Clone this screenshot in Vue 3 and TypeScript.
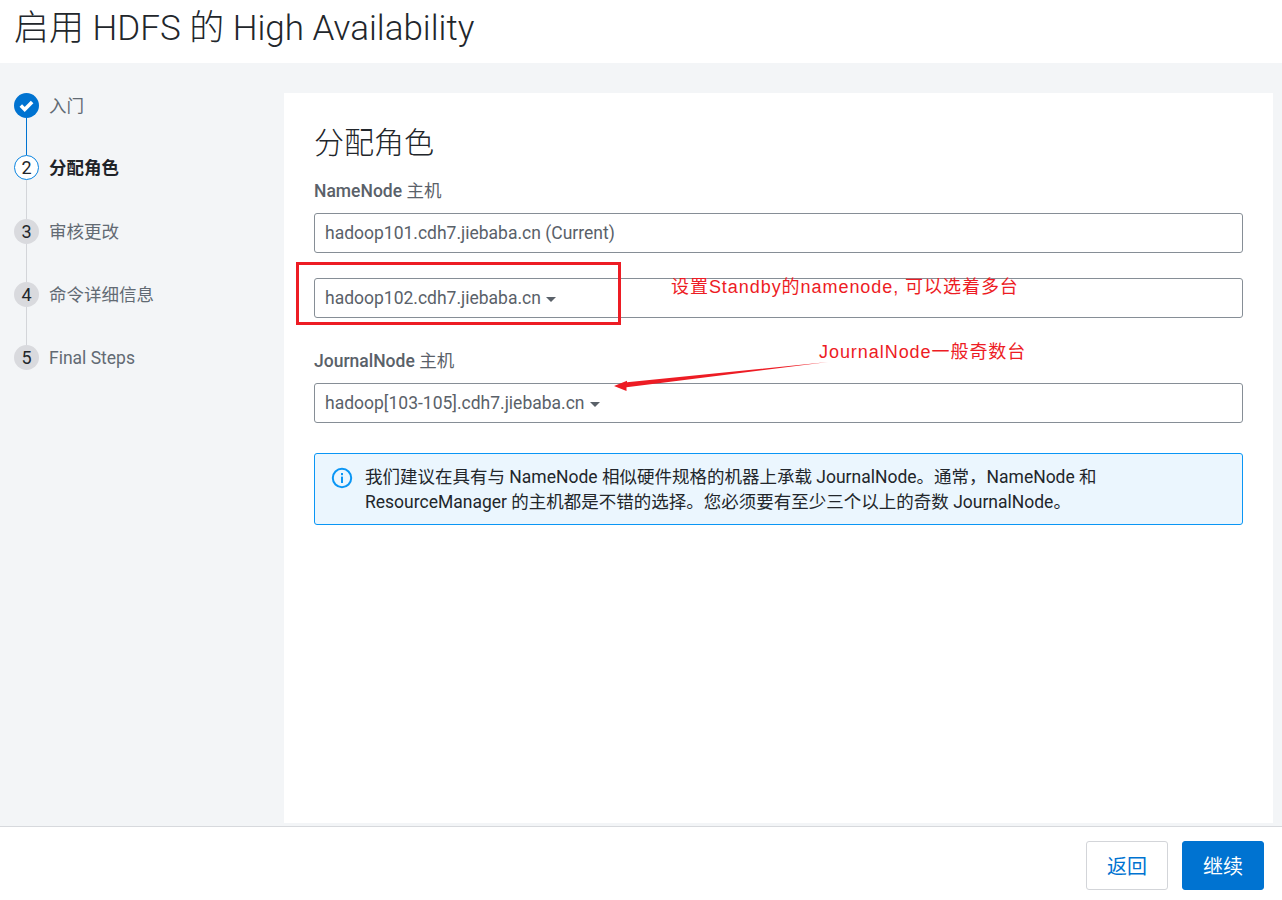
<script setup lang="ts">
const steps = [
  { n: '', label: '入门', state: 'done' },
  { n: '2', label: '分配角色', state: 'active' },
  { n: '3', label: '审核更改', state: 'todo' },
  { n: '4', label: '命令详细信息', state: 'todo' },
  { n: '5', label: 'Final Steps', state: 'todo' },
]
</script>

<template>
  <div class="page">
    <header class="head"><h1>启用 HDFS 的 High Availability</h1></header>
    <div class="middle">
      <nav class="side">
        <div v-for="(s, i) in steps" :key="i" class="step" :class="s.state">
          <span class="dot">
            <svg v-if="s.state === 'done'" width="25" height="25" viewBox="0 0 25 25">
              <circle cx="12.5" cy="12.5" r="12.5" fill="#0073d1" />
              <path d="M6.8 12.6l3.9 3.9 7.4-7.5" fill="none" stroke="#fff" stroke-width="3.6" />
            </svg>
            <template v-else>{{ s.n }}</template>
          </span>
          <span class="label">{{ s.label }}</span>
        </div>
      </nav>
      <main class="panel">
        <h2>分配角色</h2>
        <label class="lbl">NameNode <span>主机</span></label>
        <div class="field">hadoop101.cdh7.jiebaba.cn (Current)</div>
        <div class="field second">hadoop102.cdh7.jiebaba.cn<i class="caret"></i></div>
        <label class="lbl two">JournalNode <span>主机</span></label>
        <div class="field">hadoop[103-105].cdh7.jiebaba.cn<i class="caret"></i></div>
        <div class="alert">
          <svg class="info" width="22" height="22" viewBox="0 0 22 22">
            <circle cx="11" cy="11" r="9.2" fill="none" stroke="#0a96f5" stroke-width="2" />
            <rect x="10" y="9.6" width="2" height="6.4" fill="#0a96f5" />
            <rect x="10" y="6" width="2" height="2.2" fill="#0a96f5" />
          </svg>
          <p>我们建议在具有与 NameNode 相似硬件规格的机器上承载 JournalNode。通常，NameNode 和 ResourceManager 的主机都是不错的选择。您必须要有至少三个以上的奇数 JournalNode。</p>
        </div>
      </main>
    </div>
    <footer class="foot">
      <button class="btn ghost">返回</button>
      <button class="btn primary">继续</button>
    </footer>

    <div class="redbox"></div>
    <div class="note n1">设置Standby的namenode, 可以选着多台</div>
    <div class="note n2">JournalNode一般奇数台</div>
    <svg class="arrow" width="240" height="40" viewBox="0 0 240 40">
      <polygon points="217,4 16,24.2 16,22.8 3,28 15.5,33 15.5,29.2" fill="#ed1c24" />
    </svg>
  </div>
</template>

<style>
html, body { margin: 0; background: #fff; }
</style>

<style scoped>
.page {
  position: relative;
  width: 1282px;
  height: 900px;
  display: flex;
  flex-direction: column;
  overflow: hidden;
  font-family: Roboto, "Noto Sans CJK SC", sans-serif;
  color: #1f2328;
}
.head { height: 63px; flex: none; background: #fff; display: flex; align-items: center; padding-left: 14px; }
h1 { margin: 0; font-size: 35px; font-weight: 300; color: #22262b; line-height: 1; position: relative; top: -3px; }
.middle { flex: 1; display: flex; background: #f3f5f7; padding: 30px 9px 3px 0; min-height: 0; }
.side { width: 284px; flex: none; padding-left: 14px; box-sizing: border-box; }
.step { position: relative; display: flex; align-items: flex-start; height: 63px; font-size: 17.5px; line-height: 25px; color: #626a73; }
.step.done { height: 62px; }
.step.active { height: 64px; }
.step:not(:last-child)::after {
  content: "";
  position: absolute;
  left: 12px;
  top: 25px;
  bottom: 0;
  width: 1px;
  background: #d3d5d9;
}
.step.done::after { background: #0073d1; }
.dot {
  width: 25px;
  height: 25px;
  border-radius: 50%;
  background: #d9dade;
  display: flex;
  align-items: center;
  justify-content: center;
  box-sizing: border-box;
  font-size: 18px;
  color: #22262b;
  flex: none;
  margin-right: 10px;
}
.label { position: relative; top: 1px; }
.done .dot { background: none; }
.active .dot { background: #fff; border: 1px solid #0a84e0; }
.active .label { font-weight: 700; color: #1f2328; }
.panel { flex: 1; background: #fff; padding: 30px 30px 0; box-sizing: border-box; }
h2 { margin: 0 0 18px; font-size: 30px; font-weight: 300; line-height: 40px; color: #22262b; }
.lbl { display: block; font-size: 17.5px; font-weight: 500; color: #5a6169; line-height: 20px; margin-bottom: 12px; }
.lbl span { font-weight: 400; }
.lbl.two { margin-top: 33px; }
.field {
  height: 40px;
  box-sizing: border-box;
  border: 1px solid #868e96;
  border-radius: 3px;
  padding: 0 10px;
  display: flex;
  align-items: center;
  font-size: 17.5px;
  color: #5a6169;
}
.second { margin-top: 25px; }
.caret { width: 0; height: 0; margin: 3px 0 0 5px; border: 5px solid transparent; border-top-color: #5a6169; border-bottom-width: 0; }
.alert {
  margin-top: 30px;
  height: 72px;
  box-sizing: border-box;
  border: 1px solid #0a96f5;
  border-radius: 3px;
  background: #ebf6fe;
  display: flex;
  padding: 11px 16px;
}
.info { flex: none; margin: 2px 12px 0 0; }
.alert p { margin: 0; font-size: 17.5px; line-height: 25px; color: #22262b; width: 760px; }
.foot {
  height: 74px;
  flex: none;
  box-sizing: border-box;
  background: #fff;
  border-top: 1px solid #d7d9dd;
  display: flex;
  justify-content: flex-end;
  align-items: flex-start;
  gap: 14px;
  padding: 14px 18px 0 0;
}
.btn { width: 82px; height: 49px; border-radius: 3px; font: 400 20px Roboto, "Noto Sans CJK SC", sans-serif; cursor: pointer; }
.ghost { background: #fff; border: 1px solid #d3d5d9; color: #0073d1; }
.primary { background: #0073d1; border: 1px solid #0073d1; color: #fff; }
.redbox { position: absolute; left: 296px; top: 262px; width: 325px; height: 63px; box-sizing: border-box; border: 3px solid #ed1c24; }
.note { position: absolute; color: #ed1c24; font-family: "Liberation Sans", "Noto Sans CJK SC", sans-serif; font-size: 18px; letter-spacing: 0.95px; line-height: 22px; white-space: nowrap; }
.n1 { left: 671px; top: 276px; }
.n2 { left: 819px; top: 341px; }
.arrow { position: absolute; left: 611px; top: 358px; }
</style>
